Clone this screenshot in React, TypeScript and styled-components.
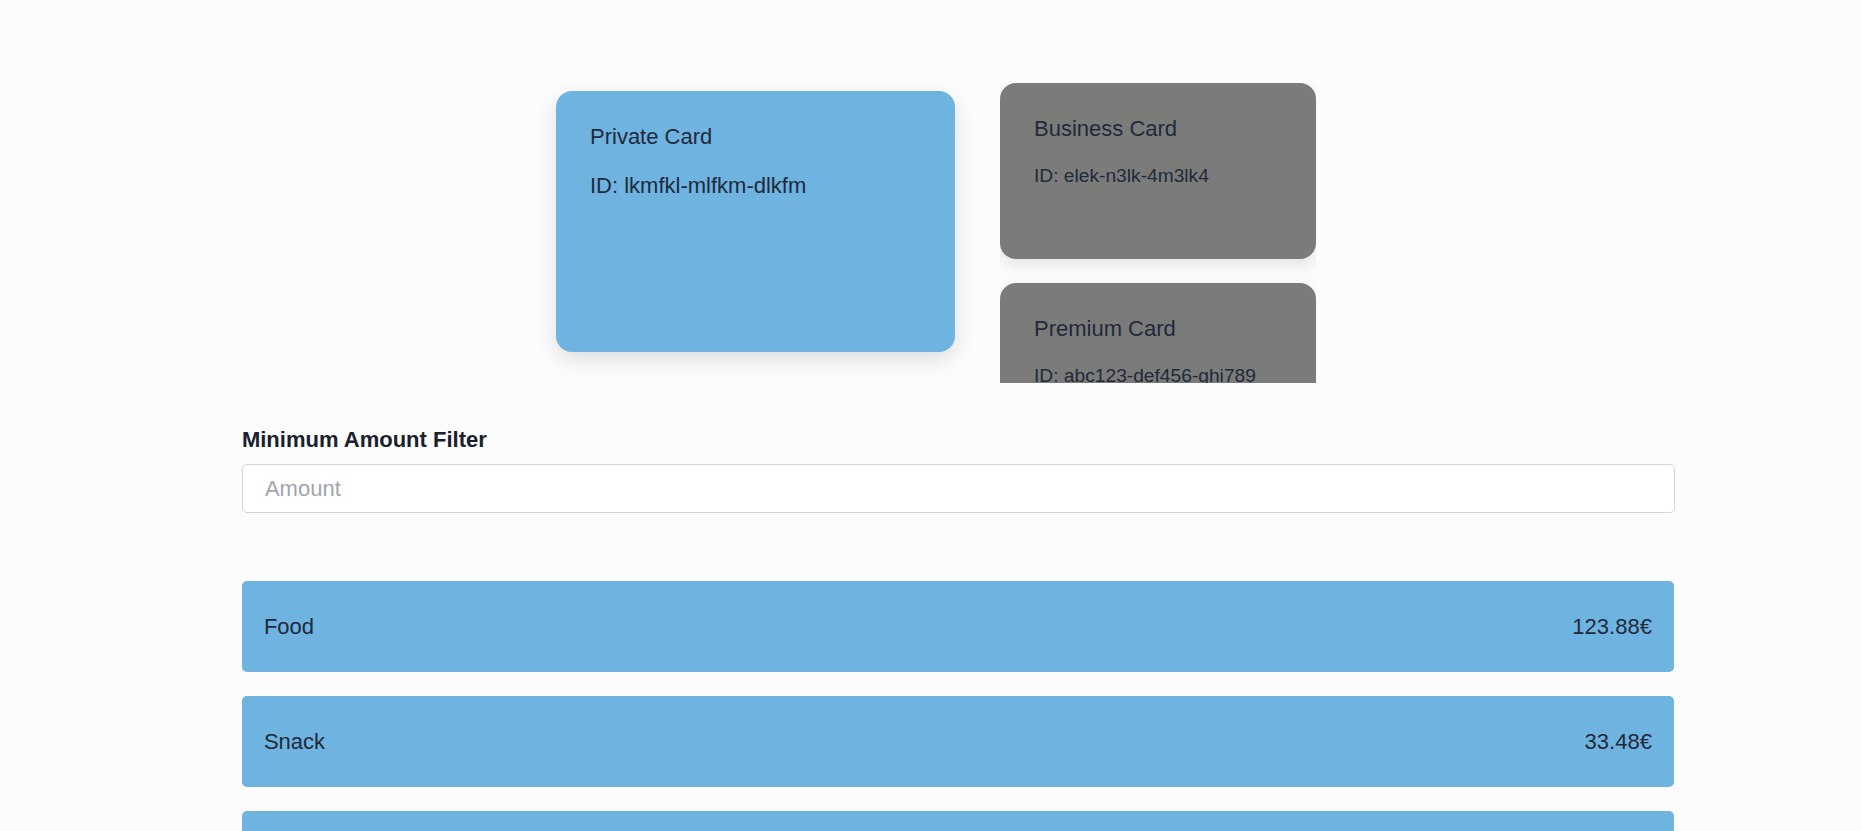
import React, { useState } from 'react'
import styled, { createGlobalStyle } from 'styled-components'

const GlobalStyle = createGlobalStyle`
  html {
    scrollbar-width: none;
  }
  html::-webkit-scrollbar {
    display: none;
  }
  body {
    margin: 0;
    background-color: #fcfcfc;
    font-family: "Liberation Sans", Arial, sans-serif;
    color: #1f2a3b;
  }
`

const Page = styled.div`
  padding-top: 83px;
`

const CardsRow = styled.div`
  display: flex;
  justify-content: center;
  align-items: flex-start;
  gap: 45px;
  padding-left: 11px;
`

const PrivateCard = styled.div`
  box-sizing: border-box;
  width: 399px;
  height: 261px;
  margin-top: 8px;
  padding: 33px 34px;
  background-color: #6fb3e0;
  border-radius: 16px;
  box-shadow: 0 8px 22px rgba(0, 0, 0, 0.12);
`

const SideColumn = styled.div`
  display: flex;
  flex-direction: column;
  gap: 24px;
  width: 316px;
  height: 300px;
  overflow-y: auto;
  scrollbar-width: none;

  &::-webkit-scrollbar {
    display: none;
  }
`

const SideCard = styled.div`
  box-sizing: border-box;
  flex-shrink: 0;
  height: 176px;
  padding: 33px 34px;
  background-color: #7b7b7a;
  border-radius: 16px;
  box-shadow: 0 6px 16px rgba(0, 0, 0, 0.1);
`

const CardTitle = styled.div`
  font-size: 22px;
  line-height: 26px;
  margin-bottom: 23px;
`

const CardId = styled.div<{ $large?: boolean }>`
  font-size: ${({ $large }) => ($large ? '22px' : '19.2px')};
  line-height: ${({ $large }) => ($large ? '26px' : '22px')};
`

const Content = styled.div`
  width: 77%;
  margin-left: 13%;
  margin-top: 44px;
`

const FilterLabel = styled.label`
  display: block;
  font-size: 22px;
  line-height: 26px;
  font-weight: 700;
  color: #1a202c;
`

const AmountInput = styled.input`
  box-sizing: border-box;
  display: block;
  width: 100%;
  height: 49px;
  margin-top: 11px;
  padding: 0 22px;
  border: 1px solid #d4d4d4;
  border-radius: 5px;
  background-color: #ffffff;
  font-family: inherit;
  font-size: 22px;
  color: #1f2a3b;
  outline: none;

  &::placeholder {
    color: #a0a4ab;
  }
`

const List = styled.div`
  display: flex;
  flex-direction: column;
  gap: 24px;
  margin-top: 68px;
  margin-right: 1px;
`

const Row = styled.div`
  display: flex;
  justify-content: space-between;
  align-items: center;
  height: 91px;
  padding: 0 22px;
  background-color: #6fb3e0;
  border-radius: 5px;
  font-size: 22px;
  color: #1f2a3b;
`

const cards = [
  { title: 'Business Card', id: 'elek-n3lk-4m3lk4' },
  { title: 'Premium Card', id: 'abc123-def456-ghi789' },
]

const transactions = [
  { category: 'Food', amount: 123.88 },
  { category: 'Snack', amount: 33.48 },
  { category: 'Drinks', amount: 12.5 },
  { category: 'Transport', amount: 45.2 },
]

const App = () => {
  const [minAmount, setMinAmount] = useState('')
  const min = parseFloat(minAmount) || 0

  return (
    <Page>
      <GlobalStyle />
      <CardsRow>
        <PrivateCard>
          <CardTitle>Private Card</CardTitle>
          <CardId $large>ID: lkmfkl-mlfkm-dlkfm</CardId>
        </PrivateCard>
        <SideColumn>
          {cards.map((c) => (
            <SideCard key={c.id}>
              <CardTitle>{c.title}</CardTitle>
              <CardId>ID: {c.id}</CardId>
            </SideCard>
          ))}
        </SideColumn>
      </CardsRow>
      <Content>
        <FilterLabel htmlFor="amount">Minimum Amount Filter</FilterLabel>
        <AmountInput
          id="amount"
          placeholder="Amount"
          value={minAmount}
          onChange={(e) => setMinAmount(e.target.value)}
        />
        <List>
          {transactions
            .filter((t) => t.amount >= min)
            .map((t) => (
              <Row key={t.category}>
                <span>{t.category}</span>
                <span>{t.amount.toFixed(2)}€</span>
              </Row>
            ))}
        </List>
      </Content>
    </Page>
  )
}

export default App
